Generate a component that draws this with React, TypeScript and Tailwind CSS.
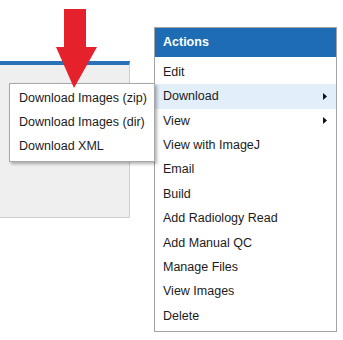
import { ReactNode } from 'react'

const acoes = [
  'Edit',
  'Download',
  'View',
  'View with ImageJ',
  'Email',
  'Build',
  'Add Radiology Read',
  'Add Manual QC',
  'Manage Files',
  'View Images',
  'Delete',
]

const comSubmenu = ['Download', 'View']

const downloads = ['Download Images (zip)', 'Download Images (dir)', 'Download XML']

function Seta() {
  return (
    <svg width="7" height="9" viewBox="0 0 7 9" className="shrink-0">
      <path d="M2 1 L6 4.5 L2 8 Z" fill="#111" />
    </svg>
  )
}

function Item({ children, ativo, seta }: { children: ReactNode; ativo?: boolean; seta?: boolean }) {
  return (
    <div className={`flex h-[24.4px] items-center justify-between pl-[8px] pr-[8px] ${ativo ? 'bg-[#e2eef9]' : ''}`}>
      <span>{children}</span>
      {seta && <Seta />}
    </div>
  )
}

export default function App() {
  return (
    <div className="relative h-[340px] w-[343px] overflow-hidden bg-white text-[12.5px] text-[#1b1b1b] [font-family:'Liberation_Sans',Arial,sans-serif]">
      {/* painel de fundo */}
      <div className="mt-[61px] h-[157px] w-[130px] border-t-4 border-r border-b border-t-[#2a72b7] border-r-[#cfcfcf] border-b-[#cfcfcf] bg-[#efefef]" />

      {/* menu Actions */}
      <div className="absolute left-[154px] top-[27px] w-[183px] border border-[#a3a3a3] bg-white pb-[3px]">
        <div className="flex h-[29px] items-center bg-[#1d6cb4] px-[8px] font-bold text-white">Actions</div>
        <div className="pt-[3px]">
          {acoes.map(a => (
            <Item key={a} ativo={a === 'Download'} seta={comSubmenu.includes(a)}>
              {a}
            </Item>
          ))}
        </div>
      </div>

      {/* submenu Download */}
      <div className="absolute left-[9px] top-[83px] w-[146px] border border-[#a8a8a8] bg-white pt-[2px] pb-[3px] shadow-[2px_2px_3px_rgba(0,0,0,0.3)]">
        {downloads.map(d => (
          <div key={d} className="flex h-[24px] items-center pl-[9px]">
            {d}
          </div>
        ))}
      </div>

      {/* seta vermelha */}
      <svg className="absolute left-[54px] top-[8px]" width="46" height="82" viewBox="0 0 46 82">
        <path d="M10 1 H32 V39 H43 L20 80 L2 39 H10 Z" fill="#e5212b" />
      </svg>
    </div>
  )
}
